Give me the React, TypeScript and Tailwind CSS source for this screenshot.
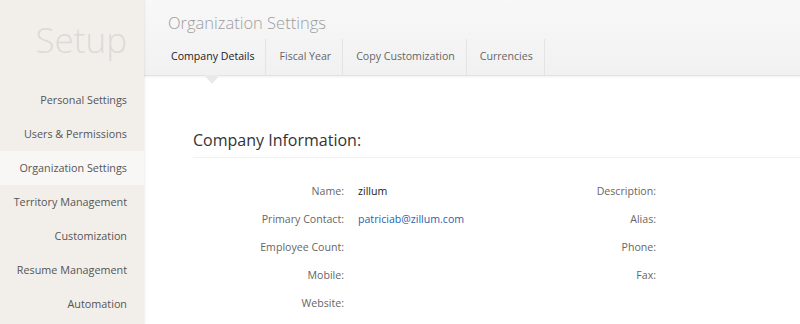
const navItems = [
  "Personal Settings",
  "Users & Permissions",
  "Organization Settings",
  "Territory Management",
  "Customization",
  "Resume Management",
  "Automation",
];

const tabs = ["Company Details", "Fiscal Year", "Copy Customization", "Currencies"];

const fields = [
  { label: "Name:", value: "zillum", side: "Description:" },
  { label: "Primary Contact:", value: "patriciab@zillum.com", link: true, side: "Alias:" },
  { label: "Employee Count:", value: "", side: "Phone:" },
  { label: "Mobile:", value: "", side: "Fax:" },
  { label: "Website:", value: "", side: "" },
];

export default function App() {
  return (
    <div className="flex h-[324px] w-[800px] overflow-hidden bg-white font-['Open_Sans',sans-serif]">
      <aside className="relative z-10 flex w-[144px] shrink-0 flex-col bg-[#f2efeb] shadow-[1px_0_2px_rgba(0,0,0,0.07)]">
        <div className="flex h-[83px] justify-end pr-[17px] pt-[22px]">
          <span className="text-[35px] font-light leading-none text-[#dcdad7]">Setup</span>
        </div>
        <nav className="flex flex-col">
          {navItems.map((item) => (
            <div
              key={item}
              className={
                item === "Organization Settings"
                  ? "flex h-[34px] items-center justify-end bg-[#f8f7f5] pr-[17px] text-[10.8px] text-[#555]"
                  : "flex h-[34px] items-center justify-end pr-[17px] text-[10.8px] text-[#555]"
              }
            >
              {item}
            </div>
          ))}
        </nav>
      </aside>

      <main className="flex flex-1 flex-col">
        <header className="relative flex h-[76px] shrink-0 flex-col border-b border-[#e2e2e2] bg-gradient-to-b from-[#f8f8f8] to-[#f1f1f1] shadow-[0_1px_2px_rgba(0,0,0,0.06)]">
          <h1 className="pl-[24px] pt-[11px] text-[16.5px] font-light leading-[24px] text-[#9d9d9d]">
            Organization Settings
          </h1>
          <div className="mt-auto flex h-[36px] pl-[14px]">
            {tabs.map((tab, i) => (
              <div
                key={tab}
                className={
                  i === 0
                    ? "relative flex items-center border-r border-[#e4e4e4] pl-[13px] pr-[11px] pb-[1px] text-[10.6px] text-[#222]"
                    : "relative flex items-center border-r border-[#e4e4e4] pl-[13px] pr-[11px] pb-[1px] text-[10.6px] text-[#666]"
                }
              >
                {tab}
                {i === 0 && (
                  <span className="absolute left-1/2 top-[36px] h-0 w-0 -translate-x-1/2 border-l-[8px] border-r-[8px] border-t-[9px] border-l-transparent border-r-transparent border-t-[#e9e9e9]" />
                )}
              </div>
            ))}
          </div>
        </header>

        <section className="pl-[49px] pt-[53px]">
          <h2 className="border-b border-[#f1f1f1] pb-[6px] text-[16px] leading-[22px] text-[#333]">
            Company Information:
          </h2>
          <div className="mt-[20px] grid grid-cols-[151px_160px_124px_1fr] gap-x-[14px] text-[10.6px]">
            {fields.map((f) => (
              <div key={f.label} className="contents">
                <div className="flex h-[28px] items-center justify-end text-[#666]">{f.label}</div>
                <div
                  className={
                    f.link
                      ? "flex h-[28px] items-center text-[#2c62ad]"
                      : "flex h-[28px] items-center text-[#222]"
                  }
                >
                  {f.value}
                </div>
                <div className="flex h-[28px] items-center justify-end text-[#666]">{f.side}</div>
                <div />
              </div>
            ))}
          </div>
        </section>
      </main>
    </div>
  );
}
